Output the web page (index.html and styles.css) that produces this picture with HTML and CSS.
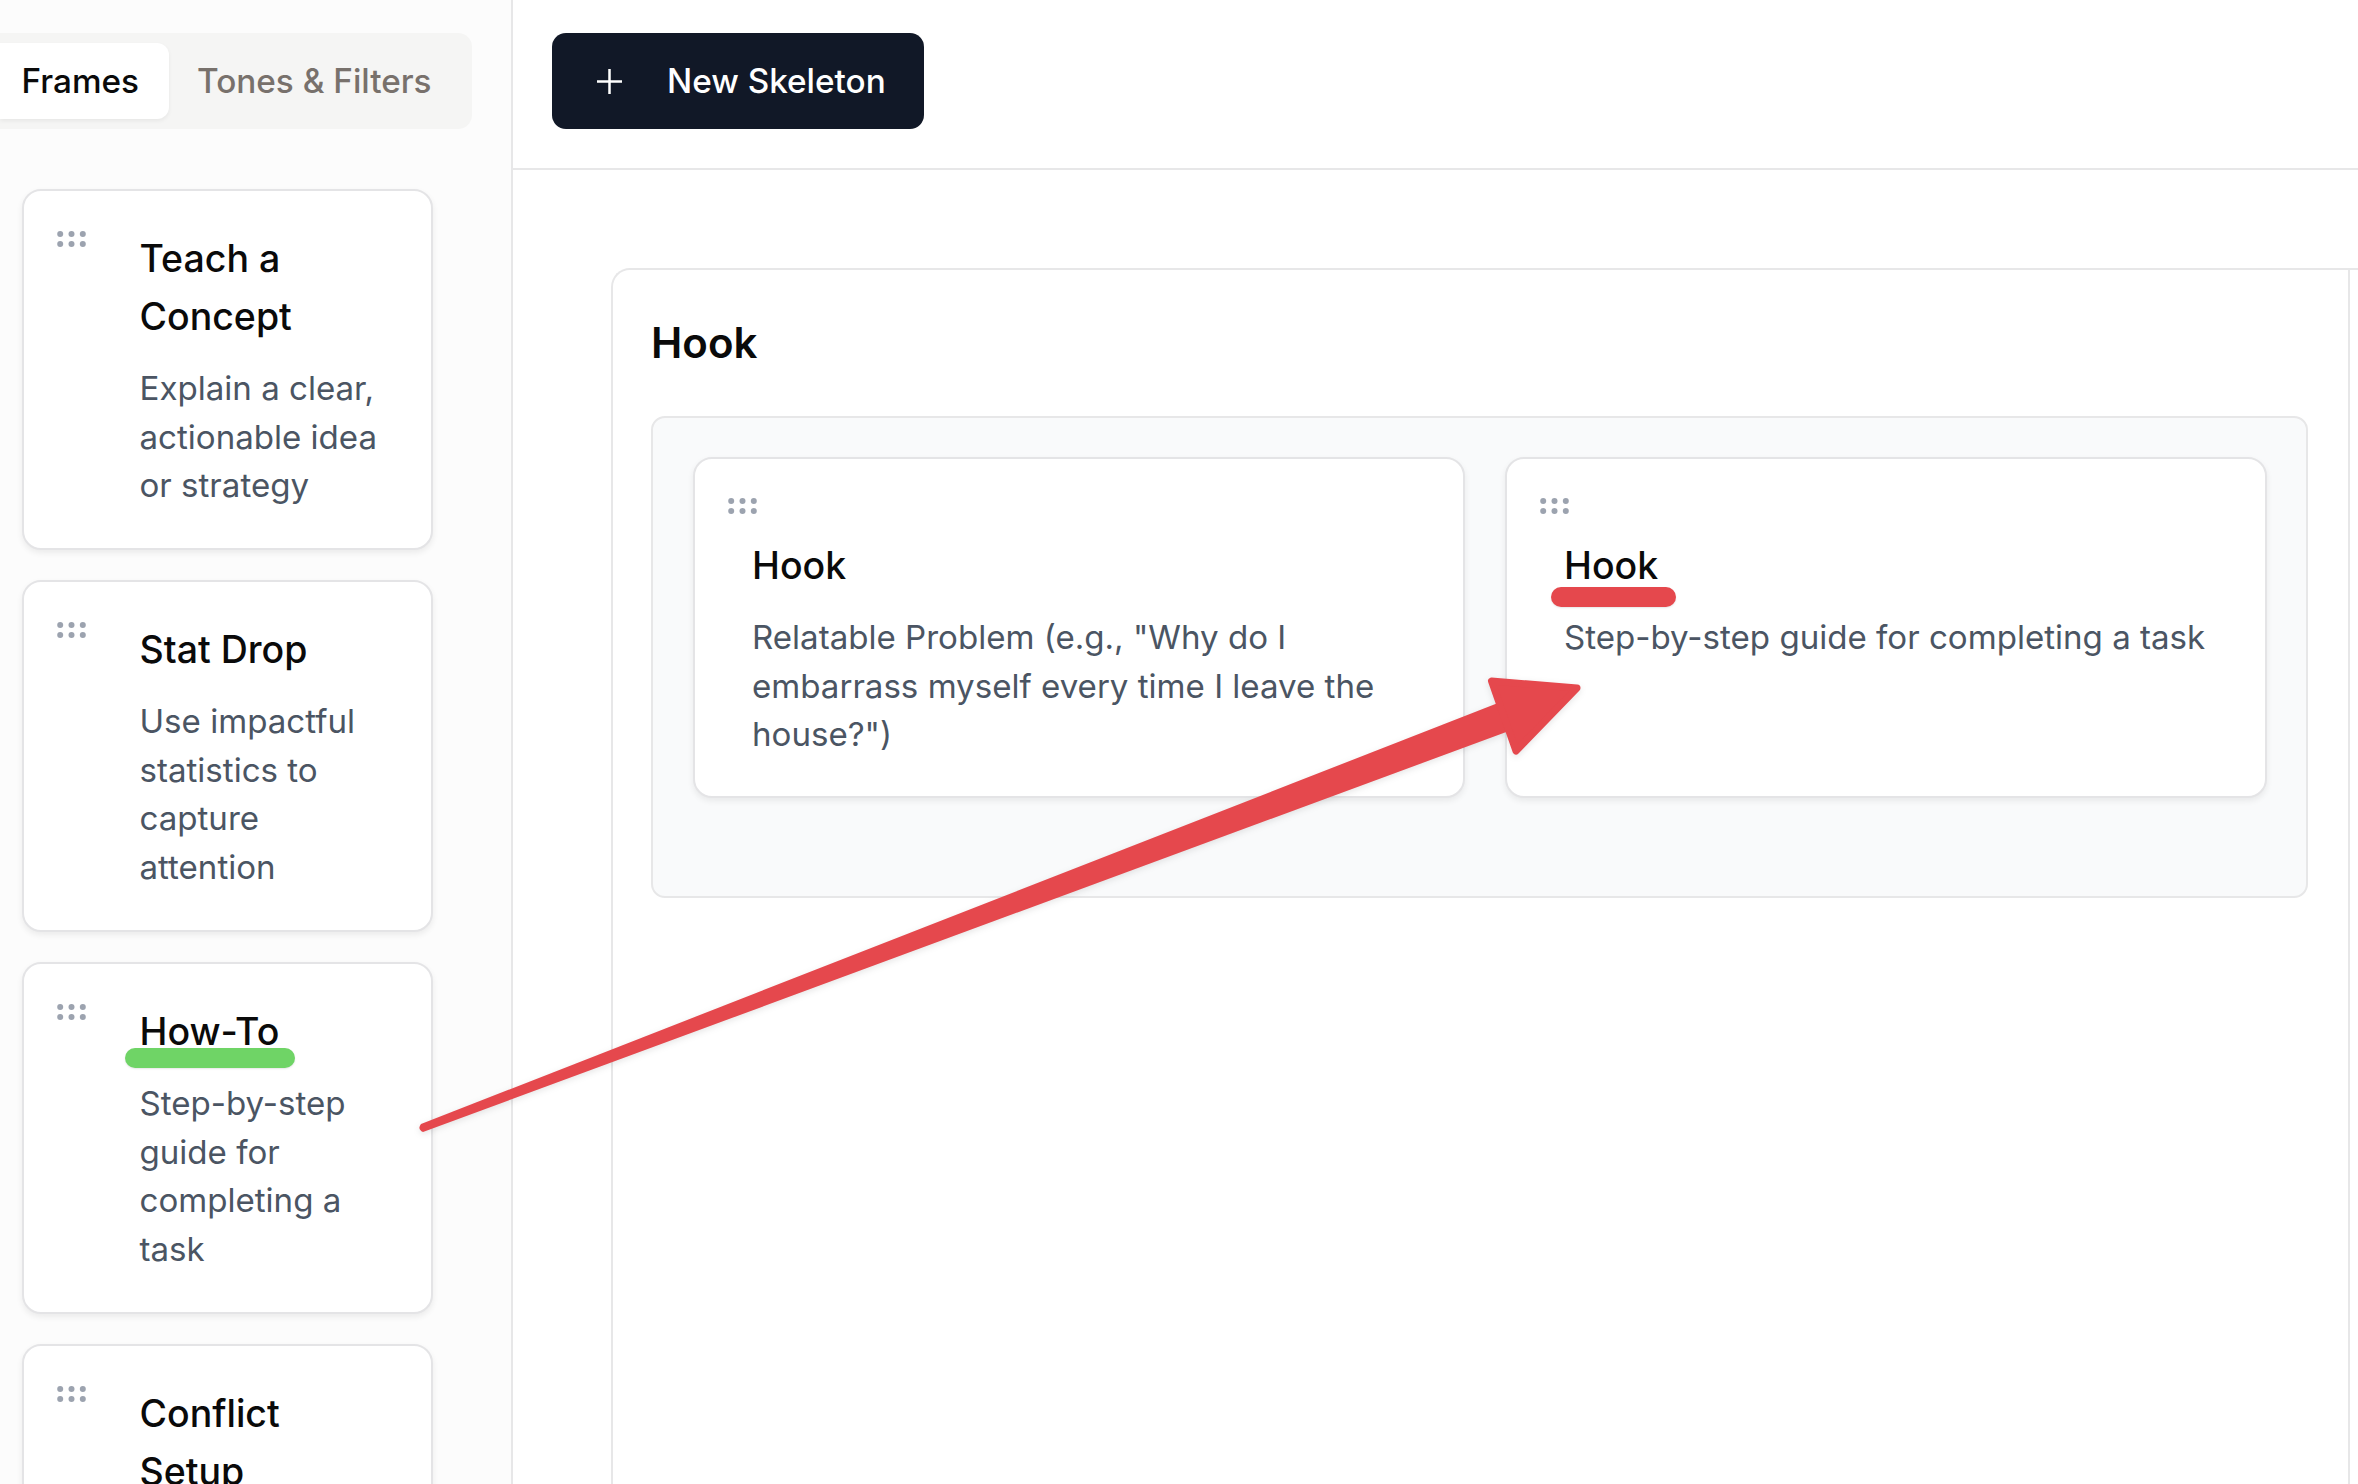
FILE: index.html
```html
<!DOCTYPE html>
<html lang="en">
<head>
<meta charset="utf-8">
<title>Skeleton Builder</title>
<link rel="stylesheet" href="styles.css">
</head>
<body>
<div class="app">
  <aside class="sidebar">
    <div class="tabs">
      <div class="tab tab-active">Frames</div>
      <div class="tab">Tones &amp; Filters</div>
    </div>
    <div class="frames">
      <article class="card">
        <svg class="handle" viewBox="0 0 30 16"><g fill="#9ca3af"><circle cx="3.2" cy="3" r="3"/><circle cx="14.5" cy="3" r="3"/><circle cx="25.8" cy="3" r="3"/><circle cx="3.2" cy="13" r="3"/><circle cx="14.5" cy="13" r="3"/><circle cx="25.8" cy="13" r="3"/></g></svg>
        <h3 class="title">Teach a Concept</h3>
        <p class="desc">Explain a clear, actionable idea or strategy</p>
      </article>
      <article class="card">
        <svg class="handle" viewBox="0 0 30 16"><g fill="#9ca3af"><circle cx="3.2" cy="3" r="3"/><circle cx="14.5" cy="3" r="3"/><circle cx="25.8" cy="3" r="3"/><circle cx="3.2" cy="13" r="3"/><circle cx="14.5" cy="13" r="3"/><circle cx="25.8" cy="13" r="3"/></g></svg>
        <h3 class="title">Stat Drop</h3>
        <p class="desc">Use impactful statistics to capture attention</p>
      </article>
      <article class="card">
        <svg class="handle" viewBox="0 0 30 16"><g fill="#9ca3af"><circle cx="3.2" cy="3" r="3"/><circle cx="14.5" cy="3" r="3"/><circle cx="25.8" cy="3" r="3"/><circle cx="3.2" cy="13" r="3"/><circle cx="14.5" cy="13" r="3"/><circle cx="25.8" cy="13" r="3"/></g></svg>
        <h3 class="title">How-To</h3>
        <span class="mark mark-green"></span>
        <p class="desc">Step-by-step guide for completing a task</p>
      </article>
      <article class="card">
        <svg class="handle" viewBox="0 0 30 16"><g fill="#9ca3af"><circle cx="3.2" cy="3" r="3"/><circle cx="14.5" cy="3" r="3"/><circle cx="25.8" cy="3" r="3"/><circle cx="3.2" cy="13" r="3"/><circle cx="14.5" cy="13" r="3"/><circle cx="25.8" cy="13" r="3"/></g></svg>
        <h3 class="title">Conflict Setup</h3>
      </article>
    </div>
  </aside>
  <main class="main">
    <header class="toolbar">
      <button class="new-btn" type="button">
        <svg class="plus" viewBox="0 0 24 24"><path d="M12 0v24M0 12h24" fill="none" stroke="#fff" stroke-width="2.4"/></svg>
        <span>New Skeleton</span>
      </button>
    </header>
    <section class="canvas">
      <div class="section">
        <div class="section-col">
          <h2 class="section-title">Hook</h2>
          <div class="slot">
            <article class="card slot-card">
              <svg class="handle" viewBox="0 0 30 16"><g fill="#9ca3af"><circle cx="3.2" cy="3" r="3"/><circle cx="14.5" cy="3" r="3"/><circle cx="25.8" cy="3" r="3"/><circle cx="3.2" cy="13" r="3"/><circle cx="14.5" cy="13" r="3"/><circle cx="25.8" cy="13" r="3"/></g></svg>
              <h3 class="title">Hook</h3>
              <p class="desc">Relatable Problem (e.g., "Why do I embarrass myself every time I leave the house?")</p>
            </article>
            <article class="card slot-card">
              <svg class="handle" viewBox="0 0 30 16"><g fill="#9ca3af"><circle cx="3.2" cy="3" r="3"/><circle cx="14.5" cy="3" r="3"/><circle cx="25.8" cy="3" r="3"/><circle cx="3.2" cy="13" r="3"/><circle cx="14.5" cy="13" r="3"/><circle cx="25.8" cy="13" r="3"/></g></svg>
              <h3 class="title">Hook</h3>
              <span class="mark mark-red"></span>
              <p class="desc">Step-by-step guide for completing a task</p>
            </article>
          </div>
        </div>
      </div>
    </section>
  </main>
</div>
<svg class="arrow" viewBox="0 0 2358 1484">
  <path class="arrow-shaft" d="M421 1124 L1498 703 L1509 731 L423 1132 Q417 1129 421 1124 Z"/>
  <path class="arrow-head" d="M1491.500 681 L1577 688 L1516 751 Z"/>
</svg>
</body>
</html>
```
FILE: styles.css
```css
* { box-sizing: border-box; }
html, body { margin: 0; height: 100%; }
body {
  position: relative;
  overflow: hidden;
  background: #fff;
  color: #0a0a0a;
  font-family: Inter, "Liberation Sans", sans-serif;
}
.app { display: flex; height: 1484px; overflow: hidden; }

.sidebar {
  flex: 0 0 513px;
  padding: 33px 0 0 22px;
  background: #fcfcfc;
  border-right: 2px solid #e7e7e8;
  overflow: hidden;
}
.tabs {
  display: flex;
  align-items: center;
  width: 472px;
  height: 96px;
  margin: 0 0 60px -22px;
  background: #f5f5f4;
  border-radius: 0 14px 14px 0;
  font-size: 33.3px;
  font-weight: 500;
  color: #78716c;
}
.tab { padding: 0 0 0 28px; white-space: nowrap; }
.tab-active {
  display: flex;
  align-items: center;
  width: 169px;
  height: 76px;
  padding: 0 0 0 21.5px;
  background: #fff;
  color: #0a0a0a;
  border-radius: 0 12px 12px 0;
  box-shadow: 0 2px 4px rgba(0, 0, 0, 0.06);
}
.frames { display: flex; flex-direction: column; gap: 30.5px; width: 411px; }

.card {
  position: relative;
  padding: 39px 39px 38px 115.5px;
  background: #fff;
  border: 2px solid #e4e4e6;
  border-radius: 19px;
  box-shadow: 0 3px 6px rgba(0, 0, 0, 0.07);
}
.handle { position: absolute; left: 33px; top: 40px; width: 30px; height: 16px; }
.title { margin: 0; font-size: 37.5px; line-height: 58px; font-weight: 500; color: #0a0a0a; }
.desc { margin: 18px 0 0; font-size: 33.1px; line-height: 48.6px; font-weight: 400; color: #4b5563; }

.mark { position: absolute; height: 20px; border-radius: 10px; box-shadow: 0 1px 2px rgba(0, 0, 0, 0.1); }
.mark-green { left: 101px; top: 84px; width: 170px; background: #6fd466; }
.mark-red { left: 44px; top: 128px; width: 125px; background: #e5484d; }

.main { flex: 1; display: flex; flex-direction: column; min-width: 0; }
.toolbar {
  flex: 0 0 170px;
  padding: 33px 0 0 39px;
  border-bottom: 2px solid #e7e7e8;
}
.new-btn {
  display: flex;
  align-items: center;
  gap: 45px;
  width: 372px;
  height: 96px;
  padding: 0 0 0 45px;
  background: #111827;
  border: 0;
  border-radius: 14px;
  color: #fff;
  font: 500 33.3px Inter, "Liberation Sans", sans-serif;
}
.plus { width: 25px; height: 25px; }

.canvas { flex: 1; padding: 98px 0 0 98px; overflow: hidden; }
.section {
  height: 1300px;
  background: #fff;
  border-top: 2px solid #e7e7e8;
  border-left: 2px solid #e7e7e8;
  border-bottom: 2px solid #e7e7e8;
  border-radius: 19px 0 0 19px;
}
.section-col {
  width: 1737px;
  height: 100%;
  padding: 40px 0 0 38px;
  border-right: 2px solid #e7e7e8;
}
.section-title { margin: 0 0 40px; font-size: 42px; line-height: 66px; font-weight: 600; color: #0a0a0a; }
.slot {
  display: grid;
  grid-template-columns: 772px 762px;
  gap: 40px;
  width: 1657px;
  height: 482px;
  padding: 39px 40px;
  background: #f9fafb;
  border: 2px solid #e7e7e8;
  border-radius: 14px;
}
.slot-card { height: 341px; padding: 78px 39px 36px 57px; }
.slot-card .handle { top: 39px; }

.arrow { position: absolute; left: 0; top: 0; width: 2358px; height: 1484px; pointer-events: none; filter: drop-shadow(0 2px 3px rgba(0, 0, 0, 0.1)); }
.arrow-shaft { fill: #e5484d; }
.arrow-head { fill: #e5484d; stroke: #e5484d; stroke-width: 7; stroke-linejoin: round; }
```
